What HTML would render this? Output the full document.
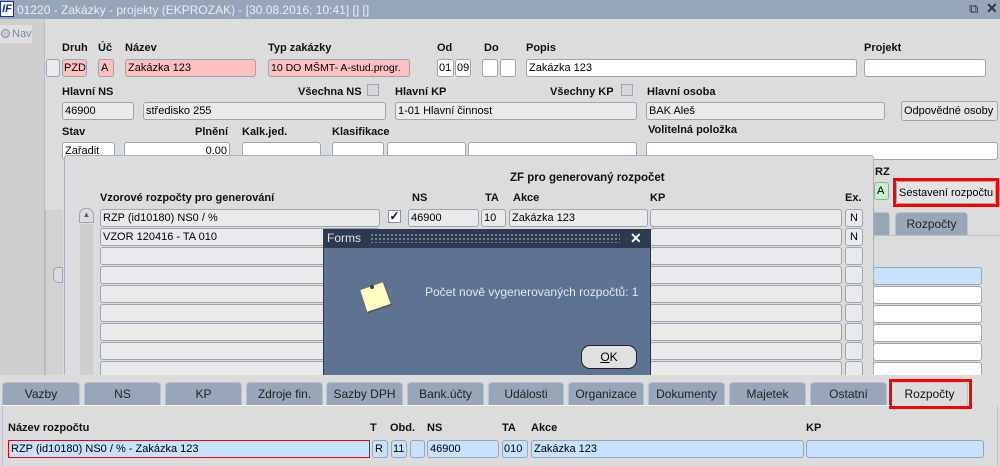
<!DOCTYPE html>
<html><head><meta charset="utf-8"><style>
*{margin:0;padding:0;box-sizing:border-box}
body{width:1000px;height:461px;overflow:hidden;background:#dcdcdc;font-family:"Liberation Sans",sans-serif;font-size:11px;color:#000;position:relative}
.a{position:absolute}
.l{position:absolute;font-weight:bold;font-size:11px;color:#111;white-space:nowrap}
.f{position:absolute;height:18px;border:1px solid #9aa6b6;border-radius:3px;background:#fff;padding:2px 2px;white-space:nowrap;overflow:hidden;font-size:11px;line-height:12px}
.p{background:#ffc0c0}
.g{background:#eaeaea}
.b{background:#c6e2ff}
.tab{position:absolute;top:382px;height:23px;background:#98a6b8;border:1px solid #b8c2d0;border-bottom:none;border-radius:4px 4px 0 0;text-align:center;font-size:12px;line-height:22px;color:#222}
</style></head><body>
<div class="a" style="left:0;top:0;width:1000px;height:19px;background:#97a5b9"></div>
<div class="a" style="left:0;top:1px;width:14px;height:16px;background:#fff;border:1px solid #1a2fa0;color:#1a2fa0;font-weight:bold;font-style:italic;font-size:11px;line-height:14px;text-align:center">IF</div>
<div class="a" style="left:17px;top:3px;color:#e8ecf2;font-size:12px">01220 - Zakázky - projekty (EKPROZAK) - [30.08.2016; 10:41] [] []</div>
<div class="a" style="left:969px;top:1px;color:#333;font-size:13px">⧉</div>
<div class="a" style="left:986px;top:0px;color:#333;font-size:14px;font-weight:bold">✕</div>
<div class="a" style="left:0;top:19px;width:45px;height:360px;background:#cfcfcf;border-right:1px solid #b8bec8"></div>
<div class="a" style="left:0;top:25px;width:32px;height:18px;background:#e0e0e0"></div>
<div class="a" style="left:1px;top:29px;width:9px;height:9px;border-radius:50%;border:1px solid #8890a0;background:#c8ccd4"></div>
<div class="a" style="left:12px;top:28px;color:#7c8aa0;font-size:11px">Nav</div>
<div class="a" style="left:45px;top:210px;width:18px;height:170px;background:#d2d2d2;border-left:1px solid #b8bec8"></div>
<div class="a" style="left:53px;top:267px;width:10px;height:16px;border:1px solid #9aa6b6;border-radius:5px 0 0 5px;background:#dcdcdc"></div>
<div class="l" style="left:62px;top:42px">Druh</div><div class="l" style="left:98px;top:42px">Úč</div><div class="l" style="left:125px;top:42px">Název</div>
<div class="l" style="left:268px;top:42px">Typ zakázky</div><div class="l" style="left:437px;top:42px">Od</div><div class="l" style="left:484px;top:42px">Do</div>
<div class="l" style="left:526px;top:42px">Popis</div><div class="l" style="left:864px;top:42px">Projekt</div>
<div class="f g" style="left:46px;top:59px;width:14px"></div>
<div class="f p" style="left:62px;top:59px;width:25px;padding:2px 1px">PZD</div>
<div class="f p" style="left:98px;top:59px;width:16px">A</div>
<div class="f p" style="left:125px;top:59px;width:131px">Zakázka 123</div>
<div class="f p" style="left:268px;top:59px;width:142px;font-size:10.5px">10 DO MŠMT- A-stud.progr.</div>
<div class="f" style="left:437px;top:59px;width:17px;padding:2px 1px">01</div><div class="f" style="left:455px;top:59px;width:16px;padding:2px 1px">09</div>
<div class="f" style="left:482px;top:59px;width:16px"></div><div class="f" style="left:500px;top:59px;width:16px"></div>
<div class="f" style="left:526px;top:59px;width:331px">Zakázka 123</div>
<div class="f" style="left:864px;top:59px;width:122px"></div>
<div class="l" style="left:62px;top:86px">Hlavní NS</div><div class="l" style="left:298px;top:86px">Všechna NS</div>
<div class="a" style="left:367px;top:84px;width:12px;height:12px;border:1px solid #9aa6b6;background:#d8d8d8"></div>
<div class="l" style="left:395px;top:86px">Hlavní KP</div><div class="l" style="left:550px;top:86px">Všechny KP</div>
<div class="a" style="left:621px;top:84px;width:12px;height:12px;border:1px solid #9aa6b6;background:#d8d8d8"></div>
<div class="l" style="left:647px;top:86px">Hlavní osoba</div>
<div class="f g" style="left:62px;top:102px;width:72px">46900</div>
<div class="f g" style="left:143px;top:102px;width:243px">středisko 255</div>
<div class="f g" style="left:395px;top:102px;width:242px">1-01 Hlavní činnost</div>
<div class="f g" style="left:646px;top:102px;width:239px">BAK Aleš</div>
<div class="f g" style="left:901px;top:101px;width:97px;height:20px;background:#e4e4e4;padding-top:3px">Odpovědné osoby</div>
<div class="l" style="left:62px;top:126px">Stav</div><div class="l" style="left:195px;top:126px">Plnění</div><div class="l" style="left:242px;top:126px">Kalk.jed.</div>
<div class="l" style="left:332px;top:126px">Klasifikace</div><div class="l" style="left:648px;top:124px">Volitelná položka</div>
<div class="f" style="left:62px;top:142px;width:53px">Zařadit</div>
<div class="f" style="left:124px;top:142px;width:106px;text-align:right">0.00</div>
<div class="f" style="left:242px;top:142px;width:79px"></div>
<div class="f" style="left:332px;top:142px;width:52px"></div>
<div class="f" style="left:387px;top:142px;width:79px"></div>
<div class="f" style="left:468px;top:142px;width:169px"></div>
<div class="f" style="left:646px;top:142px;width:352px"></div>
<div class="l" style="left:875px;top:166px">RZ</div>
<div class="f" style="left:874px;top:182px;width:15px;background:#c8f0c8">A</div>
<div class="a" style="left:893px;top:178px;width:106px;height:29px;border:3px solid #f00"></div>
<div class="f" style="left:896px;top:181px;width:100px;height:23px;background:#e4e4e4;padding-top:5px;font-size:11px">Sestavení rozpočtu</div>
<div class="tab" style="left:860px;top:212px;width:30px"></div>
<div class="tab" style="left:895px;top:212px;width:73px;font-size:12px">Rozpočty</div>
<div class="a" style="left:873px;top:235px;width:127px;height:145px;background:#dcdcdc;border-top:1px solid #b8c2d0"></div>
<div class="f b" style="left:873px;top:267px;width:109px"></div>
<div class="f" style="left:873px;top:286px;width:109px"></div>
<div class="f" style="left:873px;top:305px;width:109px"></div>
<div class="f" style="left:873px;top:324px;width:109px"></div>
<div class="f" style="left:873px;top:343px;width:109px"></div>
<div class="f" style="left:873px;top:362px;width:109px"></div>
<div class="a" style="left:64px;top:155px;width:810px;height:230px;background:#dcdcdc;border:1px solid #a8b2c0;border-radius:3px"></div>
<div class="l" style="left:510px;top:172px;font-size:11.5px">ZF pro generovaný rozpočet</div>
<div class="l" style="left:100px;top:192px">Vzorové rozpočty pro generování</div>
<div class="l" style="left:412px;top:192px">NS</div><div class="l" style="left:485px;top:192px">TA</div>
<div class="l" style="left:513px;top:192px">Akce</div><div class="l" style="left:650px;top:192px">KP</div><div class="l" style="left:845px;top:192px">Ex.</div>
<div class="a" style="left:80px;top:224px;width:13px;height:160px;background:#cfcfcf"></div>
<div class="a" style="left:79px;top:208px;width:15px;height:15px;border:1px solid #9aa6b6;border-radius:7px 7px 0 0;background:#dcdcdc;color:#50607a;font-size:8px;text-align:center;line-height:12px">▲</div>
<div class="f g" style="left:100px;top:209px;width:280px">RZP (id10180) NS0 / %</div>
<div class="a" style="left:388px;top:210px;width:13px;height:13px;border:1px solid #8890a0;background:#fff;font-size:12px;line-height:11px;text-align:center;font-weight:bold">✓</div>
<div class="f g" style="left:408px;top:209px;width:71px">46900</div>
<div class="f g" style="left:481px;top:209px;width:25px">10</div>
<div class="f g" style="left:509px;top:209px;width:139px">Zakázka 123</div>
<div class="f g" style="left:650px;top:209px;width:192px"></div>
<div class="f g" style="left:845px;top:209px;width:18px;text-align:center;padding:2px 0">N</div>
<div class="f g" style="left:100px;top:228px;width:280px">VZOR 120416 - TA 010</div>
<div class="f g" style="left:650px;top:228px;width:192px"></div>
<div class="f g" style="left:845px;top:228px;width:18px;text-align:center;padding:2px 0">N</div>
<div class="f g" style="left:100px;top:247px;width:280px"></div><div class="f g" style="left:650px;top:247px;width:192px"></div><div class="f g" style="left:845px;top:247px;width:18px"></div>
<div class="f g" style="left:100px;top:266px;width:280px"></div><div class="f g" style="left:650px;top:266px;width:192px"></div><div class="f g" style="left:845px;top:266px;width:18px"></div>
<div class="f g" style="left:100px;top:285px;width:280px"></div><div class="f g" style="left:650px;top:285px;width:192px"></div><div class="f g" style="left:845px;top:285px;width:18px"></div>
<div class="f g" style="left:100px;top:304px;width:280px"></div><div class="f g" style="left:650px;top:304px;width:192px"></div><div class="f g" style="left:845px;top:304px;width:18px"></div>
<div class="f g" style="left:100px;top:323px;width:280px"></div><div class="f g" style="left:650px;top:323px;width:192px"></div><div class="f g" style="left:845px;top:323px;width:18px"></div>
<div class="f g" style="left:100px;top:342px;width:280px"></div><div class="f g" style="left:650px;top:342px;width:192px"></div><div class="f g" style="left:845px;top:342px;width:18px"></div>
<div class="f g" style="left:100px;top:361px;width:280px"></div><div class="f g" style="left:650px;top:361px;width:192px"></div><div class="f g" style="left:845px;top:361px;width:18px"></div>
<div class="a" style="left:323px;top:229px;width:328px;height:160px;background:#5e7292;border:1px solid #2a3446"></div>
<div class="a" style="left:323px;top:229px;width:328px;height:19px;background:#2e3a4e"></div>
<div class="a" style="left:370px;top:233px;width:250px;height:10px;background-image:radial-gradient(#8a96a8 0.8px,transparent 1px);background-size:4px 4px"></div>
<div class="a" style="left:327px;top:231px;color:#e0e4ea;font-size:12px">Forms</div>
<div class="a" style="left:630px;top:230px;color:#fff;font-size:14px;font-weight:bold">✕</div>
<svg class="a" style="left:355px;top:278px" width="40" height="40"><polygon points="5,12 28,4 36,26 12,34" fill="#222" opacity=".5" transform="translate(1,1)"/><polygon points="5,12 28,4 36,26 12,34" fill="#fffdc0" stroke="#777" stroke-width=".6"/><circle cx="17" cy="9" r="2" fill="#444"/></svg>
<div class="a" style="left:425px;top:285px;color:#e2e6ee;font-size:12px">Počet nově vygenerovaných rozpočtů: 1</div>
<div class="a" style="left:581px;top:345px;width:56px;height:24px;border:1px solid #222;border-radius:9px;background:#e0e0e0;text-align:center;font-size:12px;line-height:22px"><span style="text-decoration:underline">O</span>K</div>
<div class="a" style="left:0;top:375px;width:1000px;height:86px;background:#dcdcdc"></div>
<div class="tab" style="left:2px;width:78px">Vazby</div>
<div class="tab" style="left:84px;width:77px">NS</div>
<div class="tab" style="left:165px;width:77px">KP</div>
<div class="tab" style="left:246px;width:77px">Zdroje fin.</div>
<div class="tab" style="left:326px;width:77px">Sazby DPH</div>
<div class="tab" style="left:407px;width:77px">Bank.účty</div>
<div class="tab" style="left:488px;width:76px">Události</div>
<div class="tab" style="left:568px;width:76px">Organizace</div>
<div class="tab" style="left:648px;width:77px">Dokumenty</div>
<div class="tab" style="left:729px;width:77px">Majetek</div>
<div class="tab" style="left:810px;width:77px">Ostatní</div>
<div class="tab" style="left:891px;width:77px;background:#dcdcdc;height:26px;color:#111">Rozpočty</div>
<div class="a" style="left:889px;top:379px;width:83px;height:30px;border:3px solid #f00"></div>
<div class="a" style="left:2px;top:405px;width:888px;height:1px;background:#f4f4f4"></div>
<div class="a" style="left:2px;top:406px;width:996px;height:60px;border-left:1px solid #b8c2d0;border-right:1px solid #b8c2d0"></div>
<div class="l" style="left:8px;top:422px">Název rozpočtu</div><div class="l" style="left:370px;top:422px">T</div>
<div class="l" style="left:390px;top:422px">Obd.</div><div class="l" style="left:427px;top:422px">NS</div>
<div class="l" style="left:502px;top:422px">TA</div><div class="l" style="left:531px;top:422px">Akce</div><div class="l" style="left:806px;top:422px">KP</div>
<div class="f b" style="left:8px;top:440px;width:362px;border:1.5px solid #e00;border-radius:0">RZP (id10180) NS0 / % - Zakázka 123</div>
<div class="f b" style="left:372px;top:440px;width:16px">R</div>
<div class="f b" style="left:391px;top:440px;width:16px;padding:2px 1px">11</div>
<div class="f b" style="left:410px;top:440px;width:15px"></div>
<div class="f b" style="left:427px;top:440px;width:72px">46900</div>
<div class="f b" style="left:502px;top:440px;width:26px;padding:2px 1px">010</div>
<div class="f b" style="left:531px;top:440px;width:273px">Zakázka 123</div>
<div class="f b" style="left:806px;top:440px;width:178px"></div>
</body></html>
